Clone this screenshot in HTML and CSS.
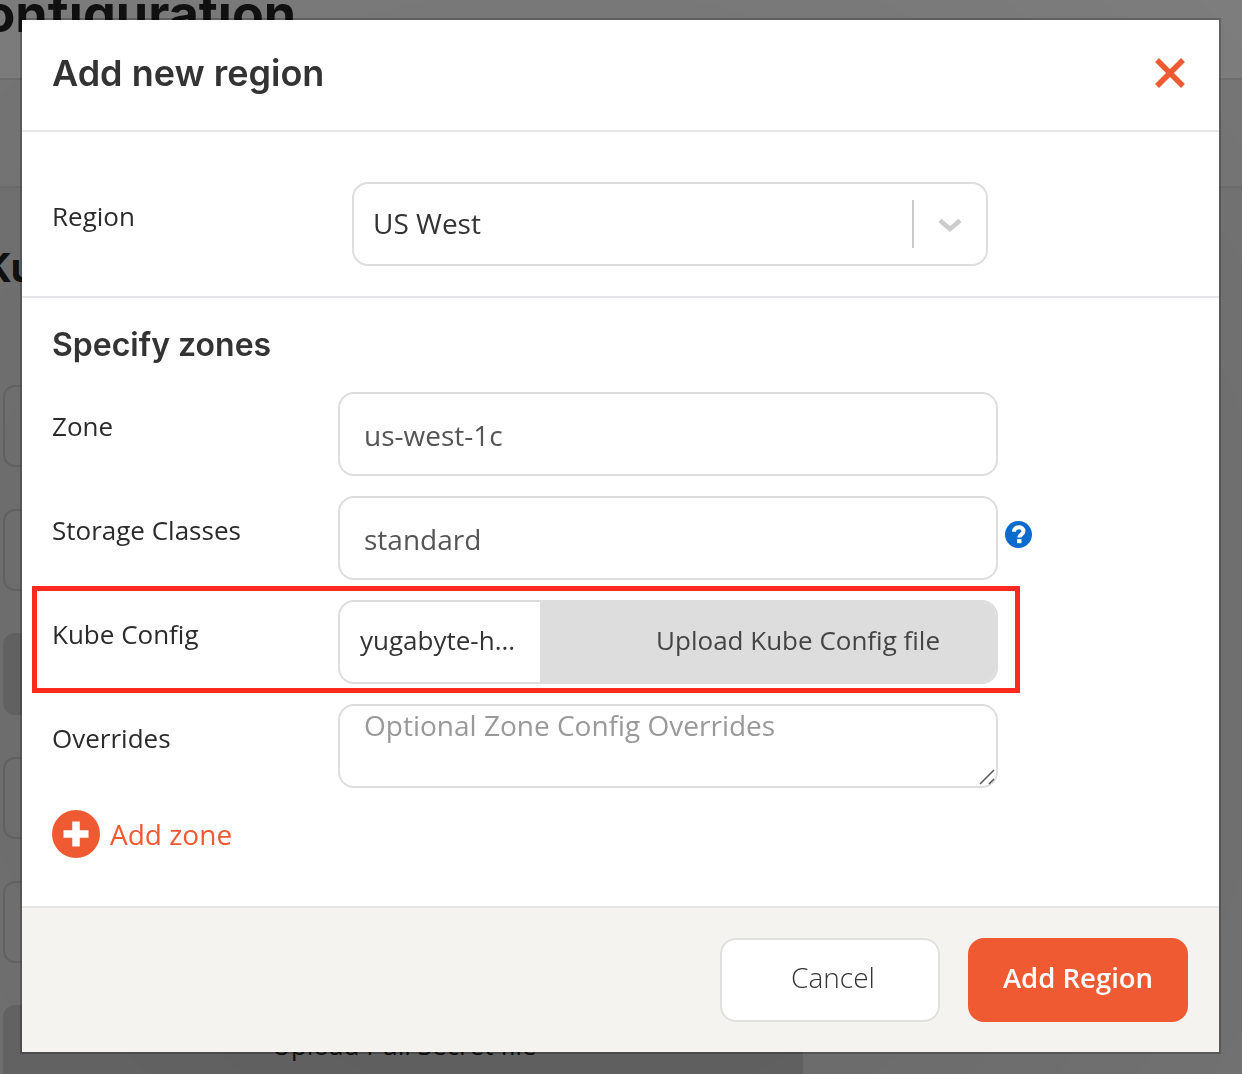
FILE: index.html
```html
<!DOCTYPE html>
<html lang="en">
<head>
<meta charset="utf-8">
<title>Add new region</title>
<link rel="stylesheet" href="styles.css">
</head>
<body>
<div class="page">
  <div class="page-head"><h1 class="page-title">Configuration</h1></div>
  <div class="page-tabs"></div>
  <div class="page-body">
    <h2 class="page-sub">Kubernetes</h2>
    <div class="ghost-stack">
      <div class="ghost"></div>
      <div class="ghost"></div>
      <div class="ghost ghost-dark"></div>
      <div class="ghost"></div>
      <div class="ghost"></div>
      <div class="ghost ghost-dark ghost-last"></div>
    </div>
  </div>
  <div class="page-upload">Upload Pull Secret file</div>
</div>
<div class="scrim"></div>
<div class="modal">
  <header class="modal-head">
    <h3 class="modal-title">Add new region</h3>
    <svg class="close" viewBox="0 0 30 30" aria-label="Close"><path d="M2 2 28 28M28 2 2 28"/></svg>
  </header>
  <section class="region-row">
    <label class="label label-region">Region</label>
    <div class="select">
      <span class="select-value">US West</span>
      <span class="select-sep"></span>
      <svg class="chev" viewBox="0 0 24 14"><path d="M2 2.500 12 11 22 2.500"/></svg>
    </div>
  </section>
  <section class="zones">
    <h4 class="zones-title">Specify zones</h4>
    <div class="field">
      <label class="label">Zone</label>
      <div class="input">us-west-1c</div>
    </div>
    <div class="field">
      <label class="label">Storage Classes</label>
      <div class="input">standard</div>
      <svg class="help" viewBox="0 0 28 28"><circle cx="14" cy="14" r="14"/><path class="help-mark" d="M9.300 11.200c0-6.300 9.800-6.300 9.800-.6 0 3.600-4.300 3.300-4.300 6.400"/><rect class="help-dot" x="12.500" y="18.800" width="4.600" height="4.200"/></svg>
    </div>
    <div class="field field-file">
      <label class="label">Kube Config</label>
      <div class="file">
        <span class="file-name">yugabyte-h...</span>
        <span class="file-btn">Upload Kube Config file</span>
      </div>
    </div>
    <div class="field">
      <label class="label label-over">Overrides</label>
      <div class="input textarea">Optional Zone Config Overrides
        <svg class="grip" viewBox="0 0 16 16"><path d="M1 15 15 1M10 15l5-5"/></svg>
      </div>
    </div>
    <div class="add-zone">
      <svg class="add-icon" viewBox="0 0 48 48"><circle cx="24" cy="24" r="24"/><path d="M24 11.500v25M11.500 24h25"/></svg>
      <span>Add zone</span>
    </div>
  </section>
  <footer class="modal-foot">
    <button class="btn btn-cancel">Cancel</button>
    <button class="btn btn-add">Add Region</button>
  </footer>
</div>
</body>
</html>
```
FILE: styles.css
```css
* { box-sizing: border-box; }
html, body { margin: 0; height: 100%; overflow: hidden; }
body { font-family: "Open Sans", "Liberation Sans", sans-serif; color: #333; background: #e6e6e6; }

.page { width: 1242px; height: 1074px; overflow: hidden; display: flex; flex-direction: column; }
.page-head { height: 78px; background: #fafafa; flex: none; overflow: hidden; }
.page-title { margin: -17px 0 0 -55px; font: 700 52px/1.2 "Inter", sans-serif; color: #222; }
.page-tabs { height: 110px; flex: none; background: #ececec; border-top: 2px solid #ddd; border-bottom: 2px solid #ddd; }
.page-body { padding: 56px 0 0 3px; flex: none; height: 830px; }
.page-sub { margin: 0 0 93px -20px; font: 700 40px/48px "Inter", sans-serif; color: #222; white-space: nowrap; }
.ghost-stack { display: flex; flex-direction: column; gap: 42px; width: 60px; }
.ghost { height: 82px; border: 2px solid #ccc; border-radius: 12px; }
.ghost-dark { background: #ccc; }
.ghost-last { width: 800px; }
.page-upload { position: absolute; left: 272px; top: 1027px; font-size: 26px; color: #222; }

.scrim { position: fixed; inset: 0; background: radial-gradient(circle at 45% 60%, rgba(0,0,0,.56), rgba(0,0,0,.5)); }

.modal { position: fixed; left: 22px; top: 20px; width: 1197px; height: 1032px; background: #fff; display: flex; flex-direction: column; box-shadow: 0 0 0 2px rgba(0,0,0,.22); }

.modal-head { height: 112px; flex: none; padding: 0 34px 4px 30px; display: flex; align-items: center; justify-content: space-between; border-bottom: 2px solid #e5e5e9; }
.modal-title { margin: 0; font: 600 36px/44px "Inter", sans-serif; color: #333; }
.close { width: 30px; height: 30px; }
.close path { stroke: #f05a32; stroke-width: 5.500; fill: none; }

.region-row { height: 166px; flex: none; border-bottom: 2px solid #e5e5e9; padding: 50px 0 0 30px; display: flex; align-items: flex-start; }
.label { width: 286px; flex: none; font-size: 26px; line-height: 36px; color: #2b2b2b; }
.label-region { width: 300px; margin-top: 16px; }
.select { width: 636px; height: 84px; border: 2px solid #ddd; border-radius: 16px; display: flex; align-items: center; font-size: 28px; padding-left: 19px; color: #333; }
.select-value { flex: 1; padding-bottom: 2px; }
.select-sep { width: 2px; height: 48px; background: #ccc; }
.chev { width: 24px; height: 14px; margin: 2px 24px 0; }
.chev path { fill: none; stroke: #ccc; stroke-width: 4.500; }

.zones { flex: 1; padding: 22px 0 0 30px; }
.zones-title { margin: 0 0 22px; font: 600 32px/50px "Inter", sans-serif; color: #333; }
.field { display: flex; align-items: flex-start; height: 84px; margin-bottom: 20px; }
.field .label { margin-top: 16px; }
.input { position: relative; width: 660px; height: 84px; border: 2px solid #ddd; border-radius: 16px; font-size: 28px; line-height: 82px; padding-left: 24px; color: #555; }
.help { width: 27px; height: 27px; margin: 25px 0 0 7px; }
.help circle { fill: #0d6bcb; }
.help-mark { fill: none; stroke: #fff; stroke-width: 4.200; }
.help-dot { fill: #fff; }

.field-file { position: relative; }
.field-file::after { content: ""; box-sizing: border-box; position: absolute; left: -20px; top: -14px; width: 988px; height: 107px; border: 5px solid #ff2a1f; pointer-events: none; }
.file { width: 660px; height: 84px; border: 2px solid #ddd; border-radius: 16px; display: flex; overflow: hidden; font-size: 26px; line-height: 76px; }
.file-name { width: 200px; padding-left: 20px; flex: none; color: #333; }
.file-btn { flex: 1; background: #ddd; text-align: right; padding-right: 56px; color: #444; }

.textarea { line-height: 38px; color: #999; }
.field .label-over { margin-top: 16px; }
.grip { position: absolute; right: 1px; bottom: 1px; width: 16px; height: 16px; }
.grip path { fill: none; stroke: #555; stroke-width: 1.500; }

.add-zone { display: flex; align-items: center; gap: 10px; margin-top: 22px; color: #f05a32; font-size: 28px; }
.add-icon { width: 48px; height: 48px; }
.add-icon circle { fill: #f05a32; }
.add-icon path { stroke: #fff; stroke-width: 7.500; fill: none; }

.modal-foot { height: 146px; flex: none; border-top: 2px solid #e5e5e9; background: #f4f3ef; padding: 30px 31px 0 0; display: flex; justify-content: flex-end; align-items: flex-start; gap: 28px; }
.btn { width: 220px; height: 84px; border-radius: 16px; font-family: "Open Sans", sans-serif; }
.btn-cancel { background: #fff; border: 2px solid #e0e0e0; color: #333; font-size: 28px; font-weight: 300; padding: 0 0 6px 6px; }
.btn-add { background: #f05a32; border: 0; color: #fff; font-size: 27.500px; font-weight: 600; padding: 0 0 6px; }
```
